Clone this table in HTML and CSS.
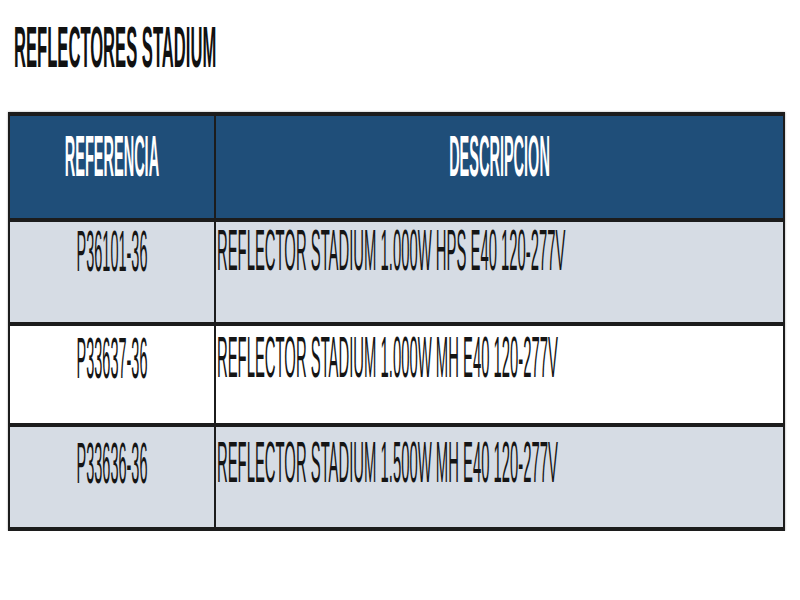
FILE: index.html
```html
<!DOCTYPE html>
<html lang="es">
<head>
<meta charset="utf-8">
<title>Reflectores Stadium</title>
<link rel="stylesheet" href="styles.css">
</head>
<body>
<div class="page">
  <h1 class="title"><span class="sq sq-title">REFLECTORES STADIUM</span></h1>
  <div class="tbl">
    <div class="row head">
      <div class="cell ref"><span class="sq">REFERENCIA</span></div>
      <div class="cell desc center"><span class="sq">DESCRIPCION</span></div>
    </div>
    <div class="row shade r1">
      <div class="cell ref"><span class="sq">P36101-36</span></div>
      <div class="cell desc"><span class="sq sq-desc">REFLECTOR STADIUM 1.000W HPS E40 120-277V</span></div>
    </div>
    <div class="row r2">
      <div class="cell ref"><span class="sq">P33637-36</span></div>
      <div class="cell desc"><span class="sq sq-desc">REFLECTOR STADIUM 1.000W MH E40 120-277V</span></div>
    </div>
    <div class="row shade r3">
      <div class="cell ref"><span class="sq">P33636-36</span></div>
      <div class="cell desc"><span class="sq sq-desc">REFLECTOR STADIUM 1.500W MH E40 120-277V</span></div>
    </div>
  </div>
</div>
</body>
</html>
```
FILE: styles.css
```css
html, body {
  margin: 0;
  padding: 0;
  background: #ffffff;
}

.page {
  padding: 0 15px 0 8px;
  font-family: "Liberation Sans", Arial, sans-serif;
}

.title {
  display: flex;
  align-items: flex-start;
  margin: 22px 0 0 6px;
  height: 58px;
  font-size: 16px;
  font-weight: bold;
  color: #111111;
  white-space: nowrap;
}

.tbl {
  margin-top: 32px;
  border-top: 4px solid #1c1c1c;
  border-left: 2px solid #1c1c1c;
  border-right: 2px solid #1c1c1c;
  box-shadow: 0 0 2px rgba(0, 0, 0, 0.35);
}

.row {
  display: grid;
  grid-template-columns: 206px minmax(0, 1fr);
  border-bottom: 4px solid #1c1c1c;
  background: #ffffff;
}

.row.head {
  height: 102px;
  background: #1f4e79;
  font-weight: bold;
}

.row.shade {
  background: #d6dce4;
}

.r1 { height: 100px; }
.r2 { height: 97px; }
.r3 { height: 100px; }

.cell {
  display: flex;
  align-items: flex-start;
  min-width: 0;
  white-space: nowrap;
  color: #151515;
}

.head .cell {
  color: #ffffff;
  padding-top: 12px;
}

.r1 .cell { padding-top: 1px; }
.r2 .cell { padding-top: 4px; }
.r3 .cell { padding-top: 8px; }

.cell.ref {
  justify-content: center;
  border-right: 2px solid #1c1c1c;
}

.cell.desc {
  justify-content: flex-start;
  padding-left: 1px;
}

.cell.desc.center {
  justify-content: center;
  padding-left: 0;
}

/* condensed text: small font stretched vertically */
.sq {
  display: inline-block;
  flex: none;
  font-size: 14.5px;
  line-height: 14.5px;
  height: 14.5px;
  transform: scaleY(4);
  transform-origin: left top;
}

.sq-desc {
  font-size: 14.85px;
  line-height: 14.85px;
  height: 14.85px;
  transform: scaleY(3.906);
}

.sq-title {
  font-size: 16.6px;
  line-height: 16.6px;
  height: 16.6px;
  transform: scaleY(3.494);
}
```
